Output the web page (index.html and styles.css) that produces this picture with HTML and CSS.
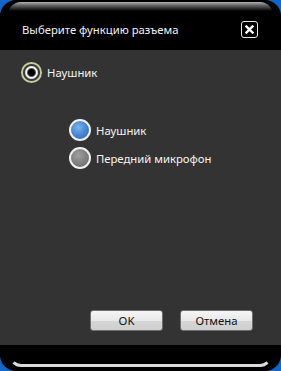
FILE: index.html
```html
<!DOCTYPE html>
<html lang="ru">
<head>
    <meta charset="UTF-8">
    <meta name="viewport" content="width=device-width, initial-scale=1.0">
    <title>Выберите функцию разъема</title>
    <link rel="stylesheet" href="styles.css">
</head>
<body>

<div class="window">
    <!-- Title bar -->
    <div class="titlebar">
        <span class="title">Выберите функцию разъема</span>
        <span class="close">
            <svg width="9" height="9" viewBox="0 0 9 9">
                <path d="M1.5 1.5 L7.5 7.5 M7.5 1.5 L1.5 7.5" stroke="#fff" stroke-width="2.4" stroke-linecap="square"/>
            </svg>
        </span>
    </div>

    <!-- Dialog body -->
    <div class="content">
        <label class="option main">
            <span class="radio-main"></span>
            <span>Наушник</span>
        </label>

        <div class="choices">
            <label class="option">
                <span class="radio blue"></span>
                <span>Наушник</span>
            </label>
            <label class="option">
                <span class="radio grey"></span>
                <span>Передний микрофон</span>
            </label>
        </div>

        <div class="buttons">
            <button class="btn">OK</button>
            <button class="btn">Отмена</button>
        </div>
    </div>

    <div class="bottombar"></div>
</div>

</body>
</html>
```

FILE: styles.css
```css
body {
    margin: 0;
    padding: 0;
    background-color: #1565c8;
    font-family: "Noto Sans", "Liberation Sans", sans-serif;
    font-size: 11.3px;
    color: white;
}

.window {
    position: relative;
    display: flex;
    flex-direction: column;
    height: 371px;
    background-color: #000;
    border-radius: 16px;
    overflow: hidden;
}

/* glossy highlight along the top edge */
.window::before {
    content: "";
    position: absolute;
    top: 2px;
    left: 8px;
    right: 8px;
    height: 16px;
    border-radius: 13px 13px 0 0;
    background: linear-gradient(to bottom, #b5b5b5 0, #6a6a6a 3px, #000 9px);
}

/* highlight line along the bottom edge */
.window::after {
    content: "";
    position: absolute;
    bottom: 4px;
    left: 9px;
    right: 9px;
    height: 12px;
    border: 3px solid transparent;
    border-top: none;
    border-bottom-color: #dcdcdc;
    border-radius: 0 0 12px 12px;
}

.titlebar {
    position: relative;
    z-index: 1;
    height: 50px;
    box-sizing: border-box;
    padding: 8px 23px 0 22px;
    display: flex;
    align-items: center;
    justify-content: space-between;
}

.title {
    color: #f2f2f2;
}

.close {
    width: 15px;
    height: 15px;
    border: 1px solid #e8e8e8;
    border-radius: 3px;
    display: flex;
    align-items: center;
    justify-content: center;
}

.content {
    flex: 1;
    background-color: #333333;
    display: flex;
    flex-direction: column;
    padding: 12px 28px 14px 21px;
}

.option {
    display: flex;
    align-items: center;
    gap: 5px;
    color: #f4f4f4;
}

.radio-main {
    width: 21px;
    height: 21px;
    border-radius: 50%;
    box-sizing: border-box;
    background: radial-gradient(circle, #000 0, #000 3px, #555 4px, #fff 5px, #d8d8d8 6px, #3a3a3a 7px, #3a3a3a 8px, #c4cc9c 9px);
}

.choices {
    display: flex;
    flex-direction: column;
    gap: 6px;
    margin-top: 36px;
    margin-left: 48px;
}

.radio {
    width: 22px;
    height: 22px;
    box-sizing: border-box;
    border-radius: 50%;
    border: 2px solid #f0f0f0;
}

.radio.blue {
    background: radial-gradient(circle at 40% 35%, #7db3ec 0, #4a8ad6 45%, #2b66b8 100%);
}

.radio.grey {
    background: radial-gradient(circle at 40% 35%, #a0a0a0 0, #808080 50%, #666 100%);
}

.buttons {
    margin-top: auto;
    display: flex;
    justify-content: flex-end;
    gap: 17px;
}

.btn {
    width: 73px;
    height: 21px;
    padding: 0;
    border: 1px solid #6e6e6e;
    border-radius: 3px;
    background: linear-gradient(to bottom, #f6f6f6 0, #e8e8e8 50%, #d6d6d6 51%, #cfcfcf 100%);
    font-family: "Noto Sans", "Liberation Sans", sans-serif;
    font-size: 11.3px;
    color: #111;
}

.bottombar {
    height: 26px;
}
```
